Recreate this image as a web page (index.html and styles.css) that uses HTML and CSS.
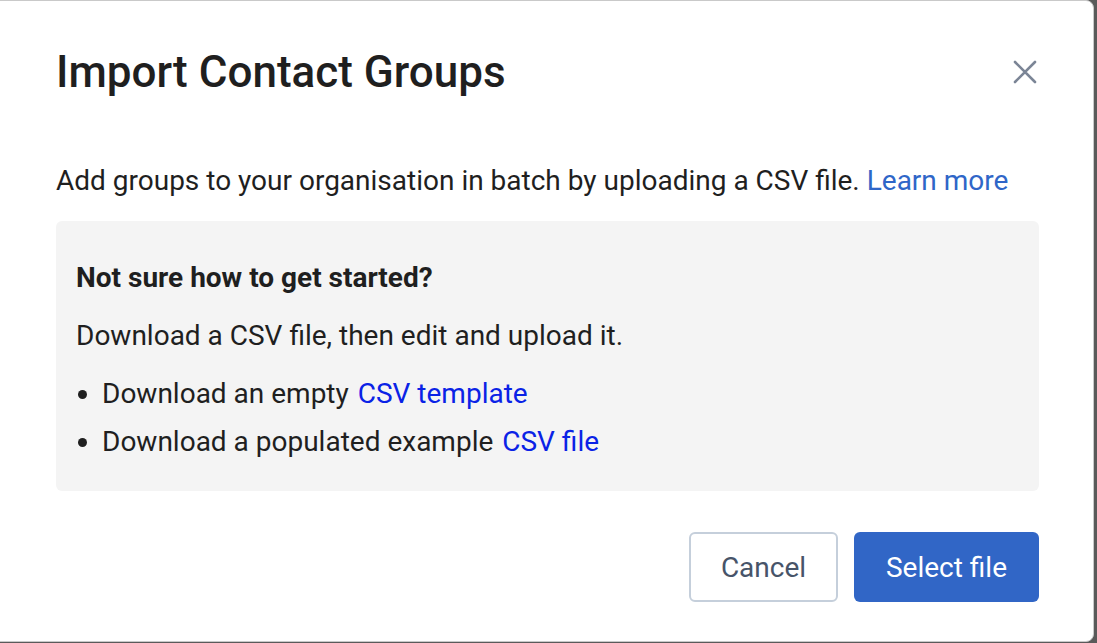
FILE: index.html
```html
<!DOCTYPE html>
<html lang="en">
<head>
<meta charset="utf-8">
<title>Import Contact Groups</title>
<link rel="stylesheet" href="styles.css">
</head>
<body>
<div class="dialog">
  <div class="header">
    <h1 class="title">Import Contact Groups</h1>
    <button class="close" aria-label="Close">
      <svg width="24" height="24" viewBox="0 0 24 24"><path d="M2 2L22 22M22 2L2 22" stroke="#7b8596" stroke-width="2.6" stroke-linecap="round" fill="none"/></svg>
    </button>
  </div>
  <p class="intro">Add groups to your organisation in batch by uploading a CSV file. <a class="learn" href="#">Learn more</a></p>
  <div class="help">
    <p class="help-title">Not sure how to get started?</p>
    <p class="help-text">Download a CSV file, then edit and upload it.</p>
    <ul class="help-list">
      <li>Download an empty <a class="csv" href="#">CSV template</a></li>
      <li>Download a populated example <a class="csv" href="#">CSV file</a></li>
    </ul>
  </div>
  <div class="footer">
    <button class="btn btn-secondary">Cancel</button>
    <button class="btn btn-primary">Select file</button>
  </div>
</div>
</body>
</html>
```
FILE: styles.css
```css
html, body {
  margin: 0;
  padding: 0;
  height: 100%;
  background: #5a5a5a;
}
body {
  font-family: Roboto, "Liberation Sans", sans-serif;
  color: #1f1f1f;
  overflow: hidden;
}
.dialog {
  box-sizing: border-box;
  width: 1095px;
  height: 642px;
  margin-left: -1px;
  background: #fff;
  border: 1px solid #c9c9c9;
  border-radius: 0 8px 8px 0;
  padding: 39px 54px 0 56px;
  display: flex;
  flex-direction: column;
}
.header {
  display: flex;
  align-items: center;
  justify-content: space-between;
  height: 64px;
}
.title {
  margin: 0;
  font-size: 44px;
  font-weight: 500;
  color: #1f1f1f;
}
.close {
  background: none;
  border: 0;
  padding: 0;
  margin-right: 2px;
  width: 24px;
  height: 24px;
  display: flex;
}
.intro {
  margin: 60px 0 0 0;
  font-size: 28px;
  line-height: 34px;
}
.learn {
  color: #2f66c8;
  text-decoration: none;
}
.help {
  margin-top: 23px;
  background: #f4f4f4;
  border-radius: 6px;
  padding: 40px 20px 32px 20px;
}
.help p {
  margin: 0;
  font-size: 28px;
  line-height: 34px;
}
.help-title {
  font-weight: 700;
}
.help-text {
  margin-top: 24px !important;
}
.help-list {
  margin: 24px 0 0 0;
  padding-left: 26px;
  font-size: 28px;
  line-height: 34px;
}
.help-list li + li {
  margin-top: 14px;
}
.csv {
  color: #0a22e6;
  text-decoration: none;
  margin-left: 2px;
}
.footer {
  display: flex;
  justify-content: flex-end;
  gap: 16px;
  margin-top: 41px;
}
.btn {
  height: 70px;
  border-radius: 6px;
  font-family: Roboto, "Liberation Sans", sans-serif;
  font-size: 28px;
  padding: 0;
  cursor: pointer;
}
.btn-secondary {
  width: 149px;
  background: #fff;
  border: 2px solid #c5cfdb;
  color: #475469;
}
.btn-primary {
  width: 185px;
  background: #3166c6;
  border: 0;
  color: #fff;
}
```
